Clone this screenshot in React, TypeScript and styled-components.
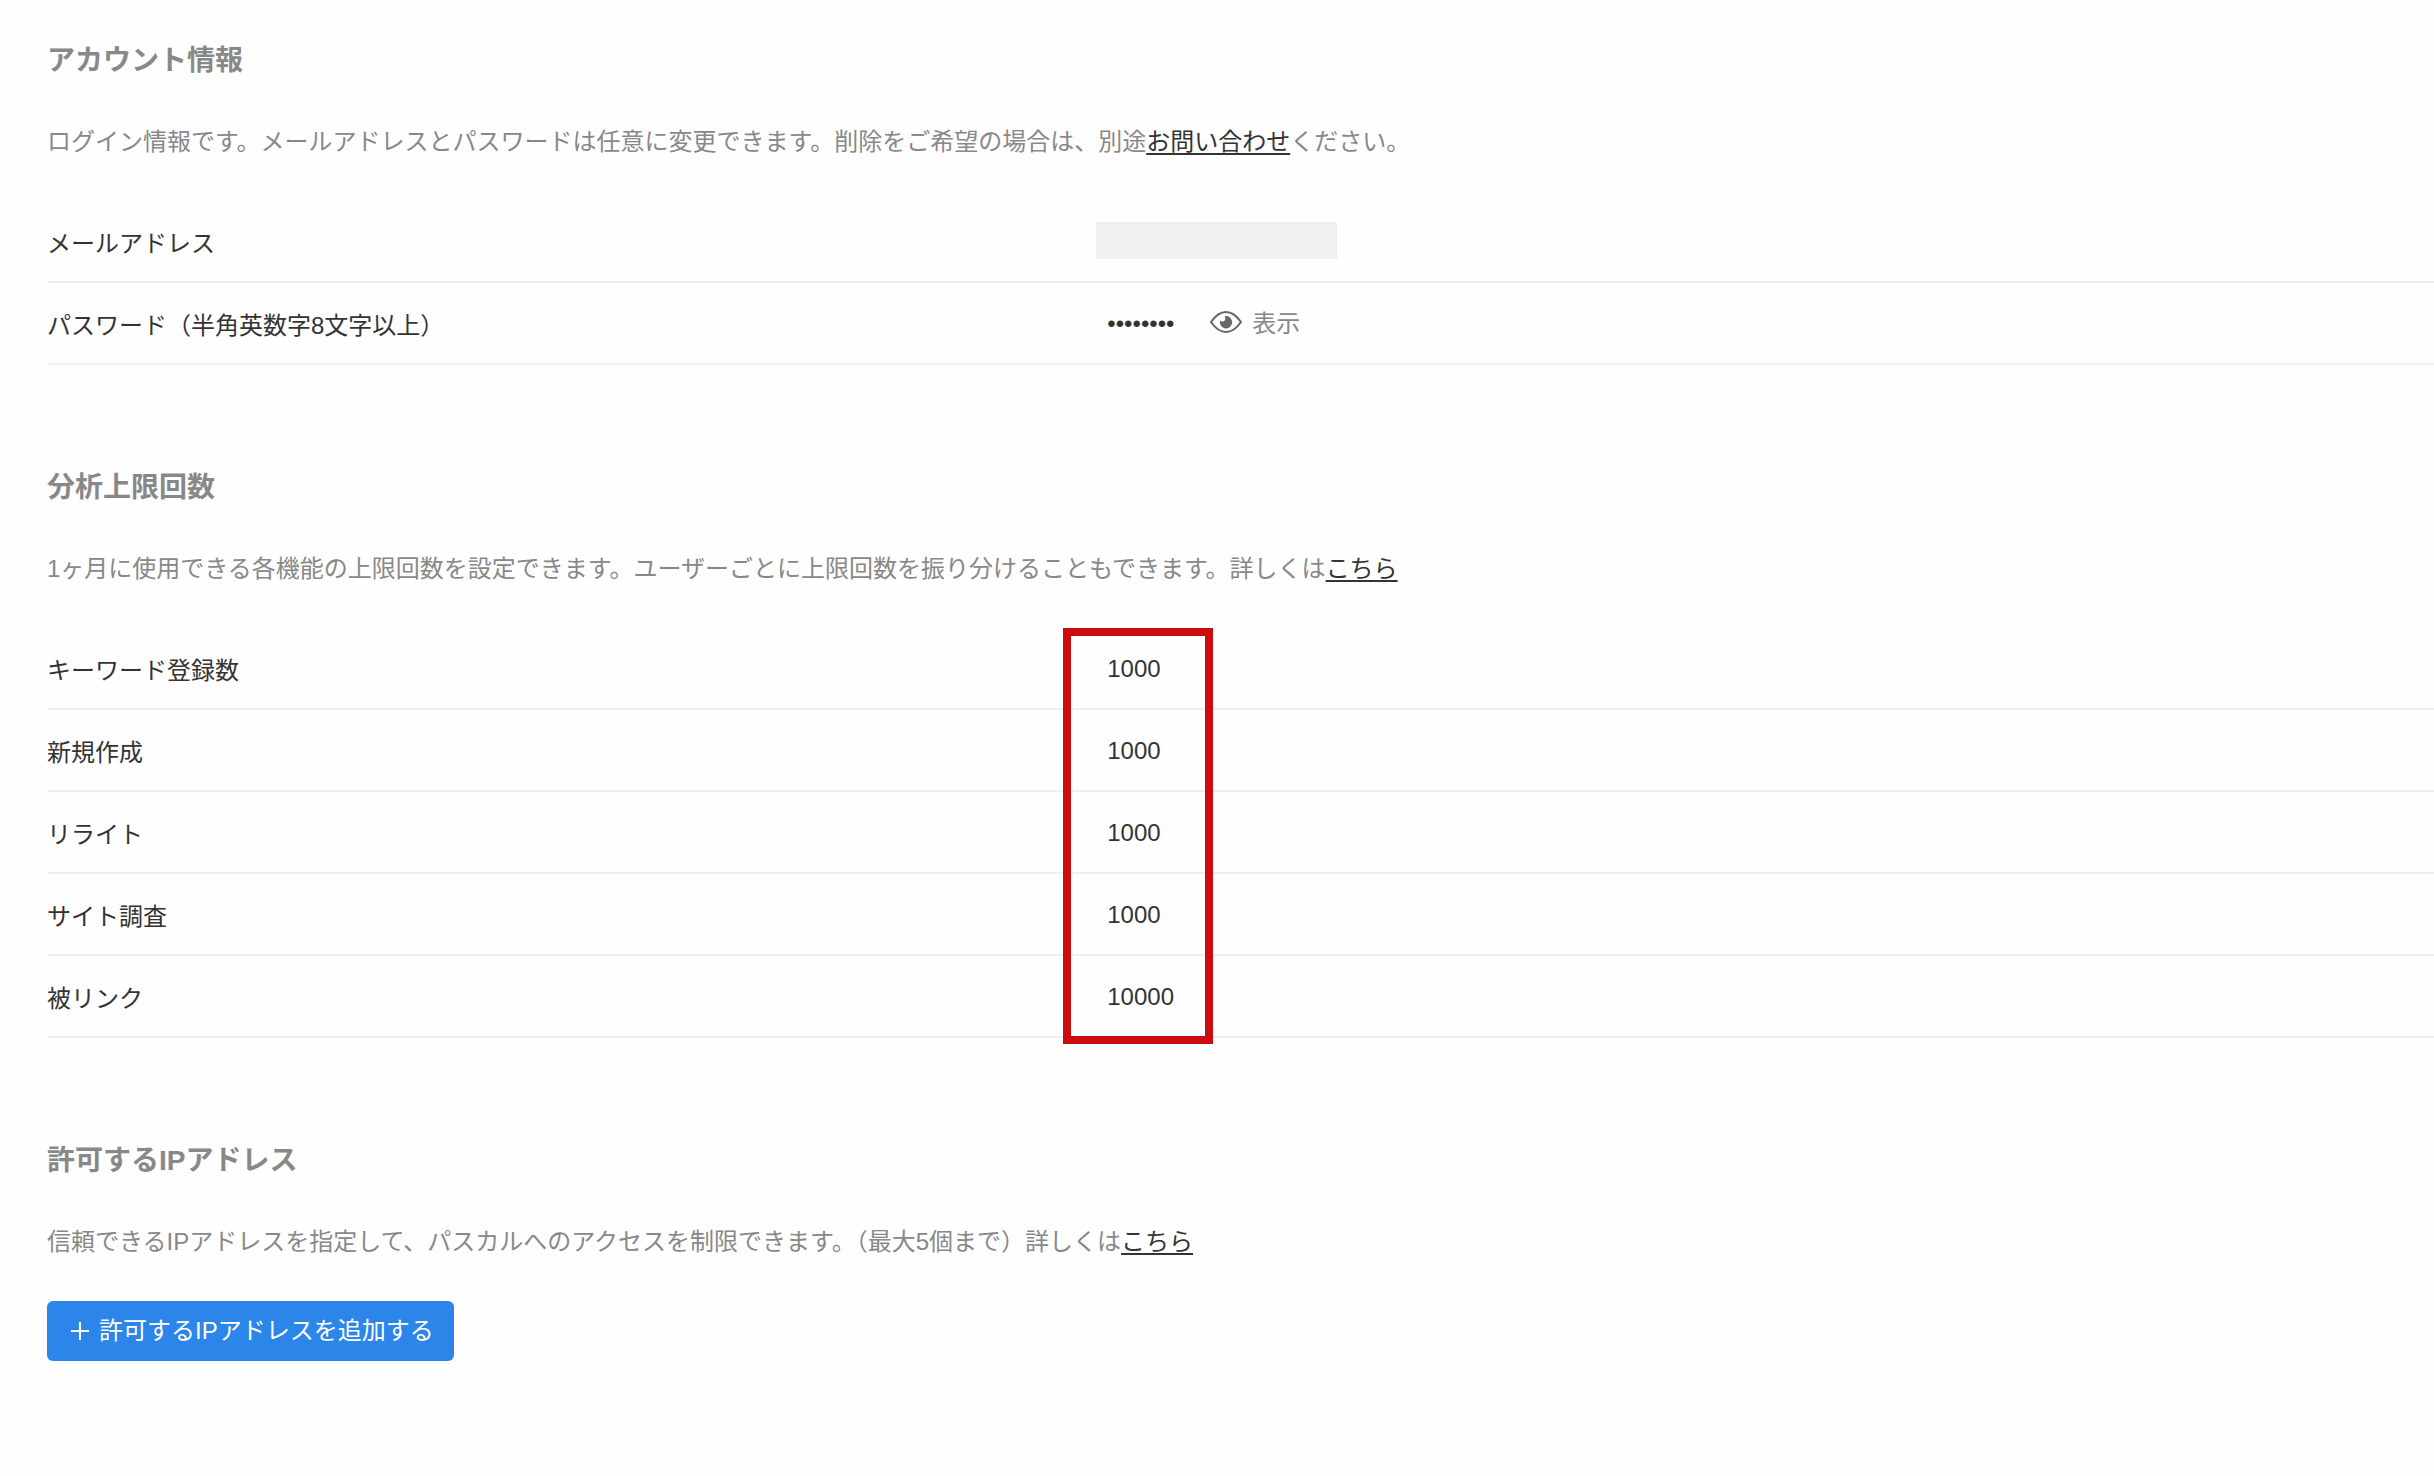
import React, { useState } from "react";
import styled, { createGlobalStyle } from "styled-components";

const color = {
  page: "#fefefe",
  text: "#333333",
  muted: "#888888",
  line: "#f0f0f0",
  primary: "#2c86ea",
  alert: "#cc0c0e",
};

const GlobalStyle = createGlobalStyle`
  *, *::before, *::after { box-sizing: border-box; }
  body {
    margin: 0;
    background: ${color.page};
    color: ${color.text};
    font: 24px/36px "Liberation Sans", "Noto Sans CJK JP", sans-serif;
  }
`;

const Page = styled.main`
  display: flex;
  flex-direction: column;
  gap: 101px;
  padding: 39px 0 48px 47px;
`;

const Section = styled.section`
  display: flex;
  flex-direction: column;
  align-items: flex-start;
`;

const Heading = styled.h2`
  margin: 0;
  color: ${color.muted};
  font-size: 28px;
  line-height: 44px;
  font-weight: 700;
`;

const Description = styled.p`
  margin: 41px 0;
  color: ${color.muted};
`;

const TextLink = styled.a`
  color: ${color.text};
  text-decoration: underline;
  text-decoration-thickness: 2px;
  text-decoration-skip-ink: none;
  text-underline-offset: 3px;
`;

const Rows = styled.div`
  width: 100%;
`;

const Row = styled.div`
  display: grid;
  grid-template-columns: calc(44% - 1px) 1fr;
  align-items: center;
  height: 82px;
  padding-top: 2px;
  border-bottom: 2px solid ${color.line};
`;

const Label = styled.label`
  padding-top: 4px;
`;

const ValueCell = styled.div`
  display: flex;
  align-items: center;
  height: 40px;
  position: relative;
`;

const Value = styled.input<{ $width: number }>`
  width: ${(p) => p.$width}px;
  height: 40px;
  padding: 0 0 0 11px;
  border: 0;
  outline: 0;
  background: transparent;
  color: ${color.text};
  font: inherit;
`;

const MaskedValue = styled(Value)`
  align-self: flex-start;
  height: 37px;
  background: ${color.line};
`;

const ShowButton = styled.button`
  display: flex;
  align-items: center;
  gap: 10px;
  padding: 0;
  border: 0;
  background: none;
  color: ${color.muted};
  font: inherit;
  cursor: pointer;

  svg {
    margin-bottom: 4px;
  }
`;

const Highlight = styled.div`
  position: absolute;
  z-index: 1;
  left: -33px;
  top: -21px;
  width: 150px;
  height: 416px;
  border: 8px solid ${color.alert};
  pointer-events: none;
`;

const AddButton = styled.button`
  display: flex;
  align-items: center;
  gap: 10px;
  height: 60px;
  padding: 0 20px 0 24px;
  border: 0;
  border-radius: 6px;
  background: ${color.primary};
  color: #ffffff;
  font: inherit;
  cursor: pointer;
`;

const EyeIcon = () => (
  <svg width="32" height="24" viewBox="0 0 32 24" aria-hidden="true">
    <path
      d="M1 12C5.500 5.500 10.500 2 16 2s10.500 3.500 15 10c-4.500 6.500-9.500 10-15 10S5.500 18.500 1 12Z"
      fill="none"
      stroke="#666"
      strokeWidth="2"
      strokeLinejoin="round"
    />
    <path
      d="M14.500 6.200A6.200 6.200 0 1 1 10 10.600c1 1 2.300 1.200 3.400.8 1-.4 1.900-1.300 1.900-2.600 0-1-.2-1.900-.8-2.600Z"
      fill="#666"
    />
  </svg>
);

const PlusIcon = () => (
  <svg width="18" height="18" viewBox="0 0 18 18" aria-hidden="true">
    <path d="M9 0v18M0 9h18" stroke="#fff" strokeWidth="2" />
  </svg>
);

const limits = [
  { id: "keyword", label: "キーワード登録数", value: "1000" },
  { id: "create", label: "新規作成", value: "1000" },
  { id: "rewrite", label: "リライト", value: "1000" },
  { id: "survey", label: "サイト調査", value: "1000" },
  { id: "backlink", label: "被リンク", value: "10000" },
];

export default function App() {
  const [shown, setShown] = useState(false);
  return (
    <>
      <GlobalStyle />
      <Page>
        <Section>
          <Heading>アカウント情報</Heading>
          <Description>
            ログイン情報です。メールアドレスとパスワードは任意に変更できます。削除をご希望の場合は、別途
            <TextLink href="#contact">お問い合わせ</TextLink>ください。
          </Description>
          <Rows>
            <Row>
              <Label htmlFor="mail">メールアドレス</Label>
              <ValueCell>
                <MaskedValue id="mail" type="email" $width={241} />
              </ValueCell>
            </Row>
            <Row>
              <Label htmlFor="password">パスワード（半角英数字8文字以上）</Label>
              <ValueCell>
                <Value
                  id="password"
                  type={shown ? "text" : "password"}
                  defaultValue="password"
                  $width={114}
                />
                <ShowButton type="button" onClick={() => setShown(!shown)}>
                  <EyeIcon />
                  表示
                </ShowButton>
              </ValueCell>
            </Row>
          </Rows>
        </Section>

        <Section>
          <Heading>分析上限回数</Heading>
          <Description>
            1ヶ月に使用できる各機能の上限回数を設定できます。ユーザーごとに上限回数を振り分けることもできます。詳しくは
            <TextLink href="#limits">こちら</TextLink>
          </Description>
          <Rows>
            {limits.map((item, index) => (
              <Row key={item.id}>
                <Label htmlFor={item.id}>{item.label}</Label>
                <ValueCell>
                  {index === 0 && <Highlight />}
                  <Value id={item.id} type="text" defaultValue={item.value} $width={241} />
                </ValueCell>
              </Row>
            ))}
          </Rows>
        </Section>

        <Section>
          <Heading>許可するIPアドレス</Heading>
          <Description>
            信頼できるIPアドレスを指定して、パスカルへのアクセスを制限できます。（最大5個まで）詳しくは
            <TextLink href="#ip">こちら</TextLink>
          </Description>
          <AddButton type="button">
            <PlusIcon />
            許可するIPアドレスを追加する
          </AddButton>
        </Section>
      </Page>
    </>
  );
}
